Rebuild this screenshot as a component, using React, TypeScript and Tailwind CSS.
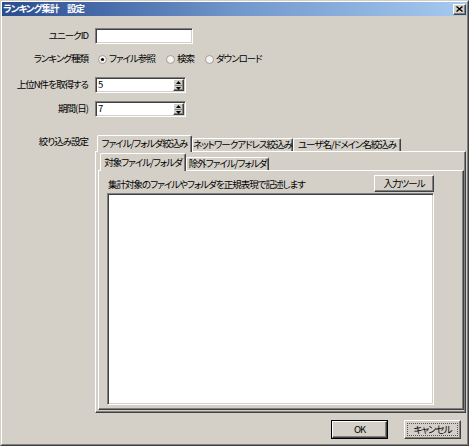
import React from "react"

const raised =
  "border border-t-white border-l-white border-r-[#404040] border-b-[#404040] shadow-[inset_-1px_-1px_0_#808080] bg-[#d4d0c8]"
const sunken =
  "border border-t-[#808080] border-l-[#808080] border-r-white border-b-white shadow-[inset_1px_1px_0_#404040,inset_-1px_-1px_0_#d4d0c8] bg-white"

function Radio({ checked, label }: { checked?: boolean; label: string }) {
  return (
    <div className="flex items-center gap-[2px]">
      <svg width="9" height="9" viewBox="0 0 9 9">
        <circle cx="4.5" cy="4.5" r="4" fill="#f4f3f0" stroke="#a09c94" strokeWidth="1" />
        {checked && <circle cx="4.5" cy="4.5" r="1.6" fill="#000" />}
      </svg>
      <span>{label}</span>
    </div>
  )
}

function Spinner({ value }: { value: string }) {
  return (
    <div className={`${sunken} w-[91px] h-[16px] flex items-center justify-between pl-[2px] pr-[1px]`}>
      <span>{value}</span>
      <div className={`${raised} w-[11px] h-[12px] flex flex-col items-center justify-center gap-[1px]`}>
        <svg width="5" height="3" viewBox="0 0 5 3">
          <polygon points="2.5,0 5,3 0,3" fill="#000" />
        </svg>
        <div className="w-[7px] h-px bg-[#808080]" />
        <svg width="5" height="3" viewBox="0 0 5 3">
          <polygon points="0,0 5,0 2.5,3" fill="#000" />
        </svg>
      </div>
    </div>
  )
}

function Tab({
  label,
  width,
  active,
  tall,
}: {
  label: string
  width: string
  active?: boolean
  tall: string
}) {
  return (
    <div
      className={`${width} ${active ? tall : "h-[13px] border-b border-b-white"} border border-b-0 border-t-white border-l-white border-r-[#404040] shadow-[inset_-1px_0_0_#808080] rounded-t-[2px] flex items-center justify-center bg-[#d4d0c8] ${active ? "relative z-10" : ""}`}
    >
      <span className="whitespace-nowrap">{label}</span>
    </div>
  )
}

export default function App() {
  return (
    <div className="w-[469px] h-[446px] bg-[#d4d0c8] border border-t-[#d4d0c8] border-l-[#d4d0c8] border-r-[#404040] border-b-[#404040] font-['Noto_Sans_CJK_JP','Noto_Sans',sans-serif] [font-feature-settings:'palt'] text-[9.5px] tracking-[-1px] leading-none text-black">
      <div className="h-full border border-t-white border-l-white border-r-[#808080] border-b-[#808080] flex flex-col">
        {/* title bar */}
        <div className="h-[14px] bg-gradient-to-r from-[#2a4c90] via-[#7196ca] to-[#a6caf0] flex items-center justify-between pl-[1px] pr-[1px]">
          <span className="text-white font-bold">ランキング集計　設定</span>
          <div className={`${raised} w-[13px] h-[11px] flex items-center justify-center`}>
            <svg width="7" height="6" viewBox="0 0 7 6">
              <path d="M0.5 0.5 L6.5 5.5 M6.5 0.5 L0.5 5.5" stroke="#000" strokeWidth="1.4" />
            </svg>
          </div>
        </div>

        {/* fields */}
        <div className="grid grid-cols-[86px_1fr] gap-x-[7px] items-center">
          <span className="text-right mt-[12px]">ユニークID</span>
          <div className={`${sunken} w-[98px] h-[16px] mt-[12px]`} />

          <span className="text-right mt-[7px]">ランキング種類</span>
          <div className="flex items-center gap-[11px] h-[16px] mt-[7px] pl-[3px]">
            <Radio checked label="ファイル参照" />
            <Radio label="検索" />
            <Radio label="ダウンロード" />
          </div>

          <span className="text-right mt-[10px]">上位N件を取得する</span>
          <div className="mt-[10px]">
            <Spinner value="5" />
          </div>

          <span className="text-right mt-[8px]">期間(日)</span>
          <div className="mt-[8px]">
            <Spinner value="7" />
          </div>
        </div>

        {/* filter tabs */}
        <div className="flex mt-[18px] gap-x-[7px]">
          <span className="w-[86px] text-right pt-[2px]">絞り込み設定</span>
          <div className="flex-1 mr-[1px] flex flex-col">
            <div className="flex items-end h-[16px] pl-[2px]">
              <Tab label="ファイル/フォルダ絞込み" width="w-[95px]" active tall="h-[17px] -mb-px" />
              <Tab label="ネットワークアドレス絞込み" width="w-[101px]" tall="" />
              <Tab label="ユーザ名/ドメイン名絞込み" width="w-[108px]" tall="" />
            </div>
            <div className="h-[262px] border border-t-white border-l-white border-r-[#404040] border-b-[#404040] shadow-[inset_-1px_-1px_0_#808080] pt-[1px] pl-[2px] pb-[2px] pr-[1px] flex flex-col">
              <div className="flex items-end h-[17px] pl-[2px]">
                <Tab label="対象ファイル/フォルダ" width="w-[86px]" active tall="h-[18px] -mb-px" />
                <Tab label="除外ファイル/フォルダ" width="w-[83px]" tall="" />
              </div>
              <div className="flex-1 border border-t-white border-l-white border-r-[#404040] border-b-[#404040] shadow-[inset_-1px_-1px_0_#808080] pl-[8px] pt-[4px]">
                <div className="w-[327px] flex flex-col">
                  <div className="flex items-center justify-between h-[17px]">
                    <span className="pl-[1px] pt-[3px]">集計対象のファイルやフォルダを正規表現で記述します</span>
                    <button className={`${raised} w-[60px] h-[17px] flex items-center justify-center`}>
                      入力ツール
                    </button>
                  </div>
                  <div className={`${sunken} h-[212px] mt-px`} />
                </div>
              </div>
            </div>
          </div>
        </div>

        {/* footer buttons */}
        <div className="flex justify-end gap-[16px] mt-[7px] pr-[6px]">
          <button className="w-[57px] h-[19px] border border-black">
            <div className={`${raised} w-full h-full flex items-center justify-center`}>OK</div>
          </button>
          <button className={`${raised} w-[57px] h-[19px] p-[2px]`}>
            <div className="w-full h-full border border-dotted border-[#555] flex items-center justify-center">
              キャンセル
            </div>
          </button>
        </div>
      </div>
    </div>
  )
}
